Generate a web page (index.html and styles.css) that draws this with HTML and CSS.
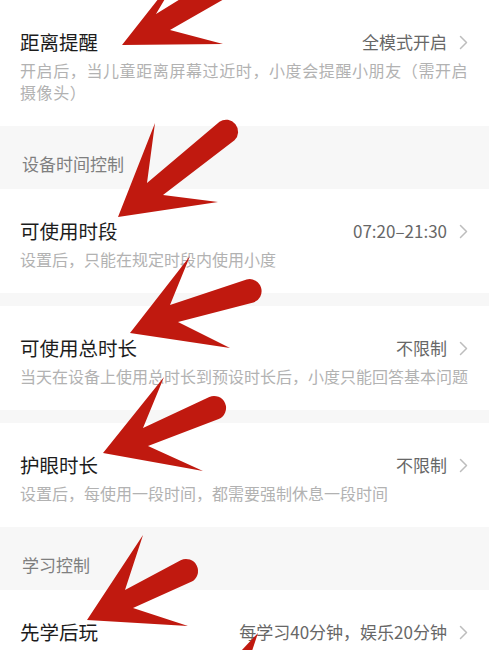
FILE: index.html
```html
<!DOCTYPE html>
<html lang="zh-CN">
<head>
<meta charset="utf-8">
<title>设置</title>
<link rel="stylesheet" href="styles.css">
</head>
<body>
<div class="page">
  <div class="row">
    <div class="row-main">
      <span class="title">距离提醒</span>
      <span class="value">全模式开启<svg class="chev" viewBox="0 0 9 15" width="9" height="15"><polyline points="1.5,1.5 7.5,7.5 1.5,13.5"/></svg></span>
    </div>
    <p class="desc desc-wide">开启后，当儿童距离屏幕过近时，小度会提醒小朋友（需开启摄像头）</p>
  </div>

  <div class="group-header">设备时间控制</div>

  <div class="row">
    <div class="row-main">
      <span class="title">可使用时段</span>
      <span class="value">07:20–21:30<svg class="chev" viewBox="0 0 9 15" width="9" height="15"><polyline points="1.5,1.5 7.5,7.5 1.5,13.5"/></svg></span>
    </div>
    <p class="desc">设置后，只能在规定时段内使用小度</p>
  </div>

  <div class="sep"></div>

  <div class="row">
    <div class="row-main">
      <span class="title">可使用总时长</span>
      <span class="value">不限制<svg class="chev" viewBox="0 0 9 15" width="9" height="15"><polyline points="1.5,1.5 7.5,7.5 1.5,13.5"/></svg></span>
    </div>
    <p class="desc">当天在设备上使用总时长到预设时长后，小度只能回答基本问题</p>
  </div>

  <div class="sep"></div>

  <div class="row">
    <div class="row-main">
      <span class="title">护眼时长</span>
      <span class="value">不限制<svg class="chev" viewBox="0 0 9 15" width="9" height="15"><polyline points="1.5,1.5 7.5,7.5 1.5,13.5"/></svg></span>
    </div>
    <p class="desc">设置后，每使用一段时间，都需要强制休息一段时间</p>
  </div>

  <div class="group-header">学习控制</div>

  <div class="row">
    <div class="row-main">
      <span class="title">先学后玩</span>
      <span class="value">每学习40分钟，娱乐20分钟<svg class="chev" viewBox="0 0 9 15" width="9" height="15"><polyline points="1.5,1.5 7.5,7.5 1.5,13.5"/></svg></span>
    </div>
  </div>

  <svg class="arrows" viewBox="0 0 489 650" width="489" height="650">
    <path class="arrow" d="M122,45 L185,-35 L156,14 L235.9,-35.3 A12,12 0 0 1 248.1,-14.7 L170,30 L223,44 Z"/>
    <path class="arrow" d="M118,217 L155,123 L147,183 L219.5,121.7 A12,12 0 0 1 234.5,140.3 L163,195 L218,202 Z"/>
    <path class="arrow" d="M130,333 L190,256 L170,305 L246.6,279.5 A12,12 0 0 1 253.4,302.5 L178,322 L230,348 Z"/>
    <path class="arrow" d="M103,453 L164,377 L143,428 L209.3,396.9 A12,12 0 0 1 218.7,419.1 L148,446 L203,471 Z"/>
    <path class="arrow" d="M87,620 L143,535 L125,590 L180.7,560.2 A12,12 0 0 1 191.3,581.8 L133,608 L188,626 Z"/>
    <path class="arrow" d="M258,633 L241,651 L252,651 Z"/>
  </svg>
</div>
</body>
</html>
```

FILE: styles.css
```css
html, body {
  margin: 0;
  padding: 0;
  background: #ffffff;
}

body {
  font-family: "Noto Sans CJK SC", "Noto Sans", sans-serif;
  width: 489px;
  height: 650px;
  overflow: hidden;
}

.page {
  position: relative;
  width: 489px;
  height: 650px;
  overflow: hidden;
  background: #ffffff;
}

.row {
  background: #ffffff;
  padding: 28px 19px 23px 20px;
}

.row-main {
  display: flex;
  justify-content: space-between;
  align-items: center;
  height: 28px;
  padding-right: 2px;
}

.title {
  font-size: 19.5px;
  line-height: 28px;
  color: #1c1c1c;
}

.value {
  display: flex;
  align-items: center;
  gap: 12px;
  font-size: 17px;
  line-height: 24px;
  color: #676767;
}

.chev {
  display: block;
}

.chev polyline {
  fill: none;
  stroke: #bdbdbd;
  stroke-width: 1.5;
  stroke-linecap: round;
  stroke-linejoin: round;
}

.desc {
  margin: 3px 0 0;
  font-size: 16px;
  line-height: 22px;
  color: #b2b2b2;
}

.desc-wide {
  letter-spacing: 0.6px;
}

.group-header {
  background: #f7f7f7;
  padding: 26px 20px 13px 22px;
  font-size: 17px;
  line-height: 24px;
  color: #7f7f7f;
}

.sep {
  height: 13px;
  background: #f7f7f7;
}

.arrows {
  position: absolute;
  left: 0;
  top: 0;
  pointer-events: none;
}

.arrow {
  fill: #c0190f;
}
```
